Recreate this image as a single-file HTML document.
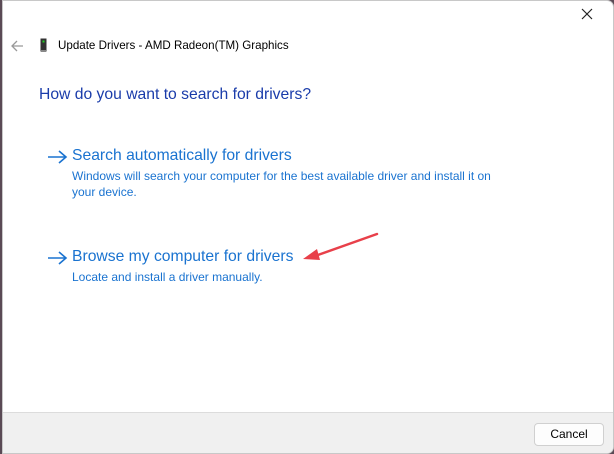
<!DOCTYPE html>
<html><head><style>
body{margin:0;width:614px;height:454px;overflow:hidden;background:#5a4a55;font-family:"Liberation Sans",sans-serif;position:relative}
.win{position:absolute;left:2px;top:0;width:610px;height:452px;background:#fff;border:1px solid #c8c8c8;border-radius:0 7px 7px 0;overflow:hidden}
.t{position:absolute;white-space:nowrap}
.foot{position:absolute;left:0;right:0;top:411px;bottom:0;background:#f0f0f0;border-top:1px solid #dcdcdc}
.btn{position:absolute;left:531px;top:10px;width:68px;height:21px;background:#fdfdfd;border:1px solid #d0d0d0;border-radius:4px;font-size:12px;text-align:center;line-height:21px;color:#000}
</style></head><body>
<div class="win">
<svg class="t" style="left:577px;top:6px" width="14" height="14"><path d="M2 2L12 12M12 2L2 12" stroke="#222" stroke-width="1.2"/></svg>
<svg class="t" style="left:7px;top:38px" width="14" height="14"><path d="M13 7H2M7 2L2 7L7 12" stroke="#999" stroke-width="1.3" fill="none"/></svg>
<svg class="t" style="left:37px;top:37px" width="8" height="15"><rect x="0.5" y="0.5" width="6" height="13" fill="#333"/><rect x="2.5" y="2.5" width="2" height="2" fill="#2c2"/><rect x="1" y="12" width="5" height="2" fill="#888"/></svg>
<div class="t" style="left:55px;top:38px;font-size:11.6px;color:#000">Update Drivers - AMD Radeon(TM) Graphics</div>
<div class="t" style="left:36px;top:85px;font-size:15.7px;color:#1a3caa">How do you want to search for drivers?</div>
<svg class="t" style="left:44px;top:148px" width="22" height="16"><path d="M1 8H19M12 2L19 8L12 14" stroke="#1a73d0" stroke-width="1.6" fill="none"/></svg>
<div class="t" style="left:69px;top:146px;font-size:15.7px;color:#1a73d0">Search automatically for drivers</div>
<div class="t" style="left:69px;top:167px;font-size:12px;color:#1a73d0;line-height:16px">Windows will search your computer for the best available driver and install it on<br>your device.</div>
<svg class="t" style="left:44px;top:249px" width="22" height="16"><path d="M1 8H19M12 2L19 8L12 14" stroke="#1a73d0" stroke-width="1.6" fill="none"/></svg>
<div class="t" style="left:69px;top:247px;font-size:15.7px;color:#1a73d0">Browse my computer for drivers</div>
<div class="t" style="left:69px;top:269px;font-size:12px;color:#1a73d0">Locate and install a driver manually.</div>
<svg class="t" style="left:296px;top:228px" width="90" height="36"><path d="M78 5L16 27" stroke="#e8404a" stroke-width="2.5" stroke-linecap="round"/><path d="M4 30L18 20L21 31Z" fill="#e8404a"/></svg>
<div class="foot"><div class="btn">Cancel</div></div>
</div>
</body></html>
